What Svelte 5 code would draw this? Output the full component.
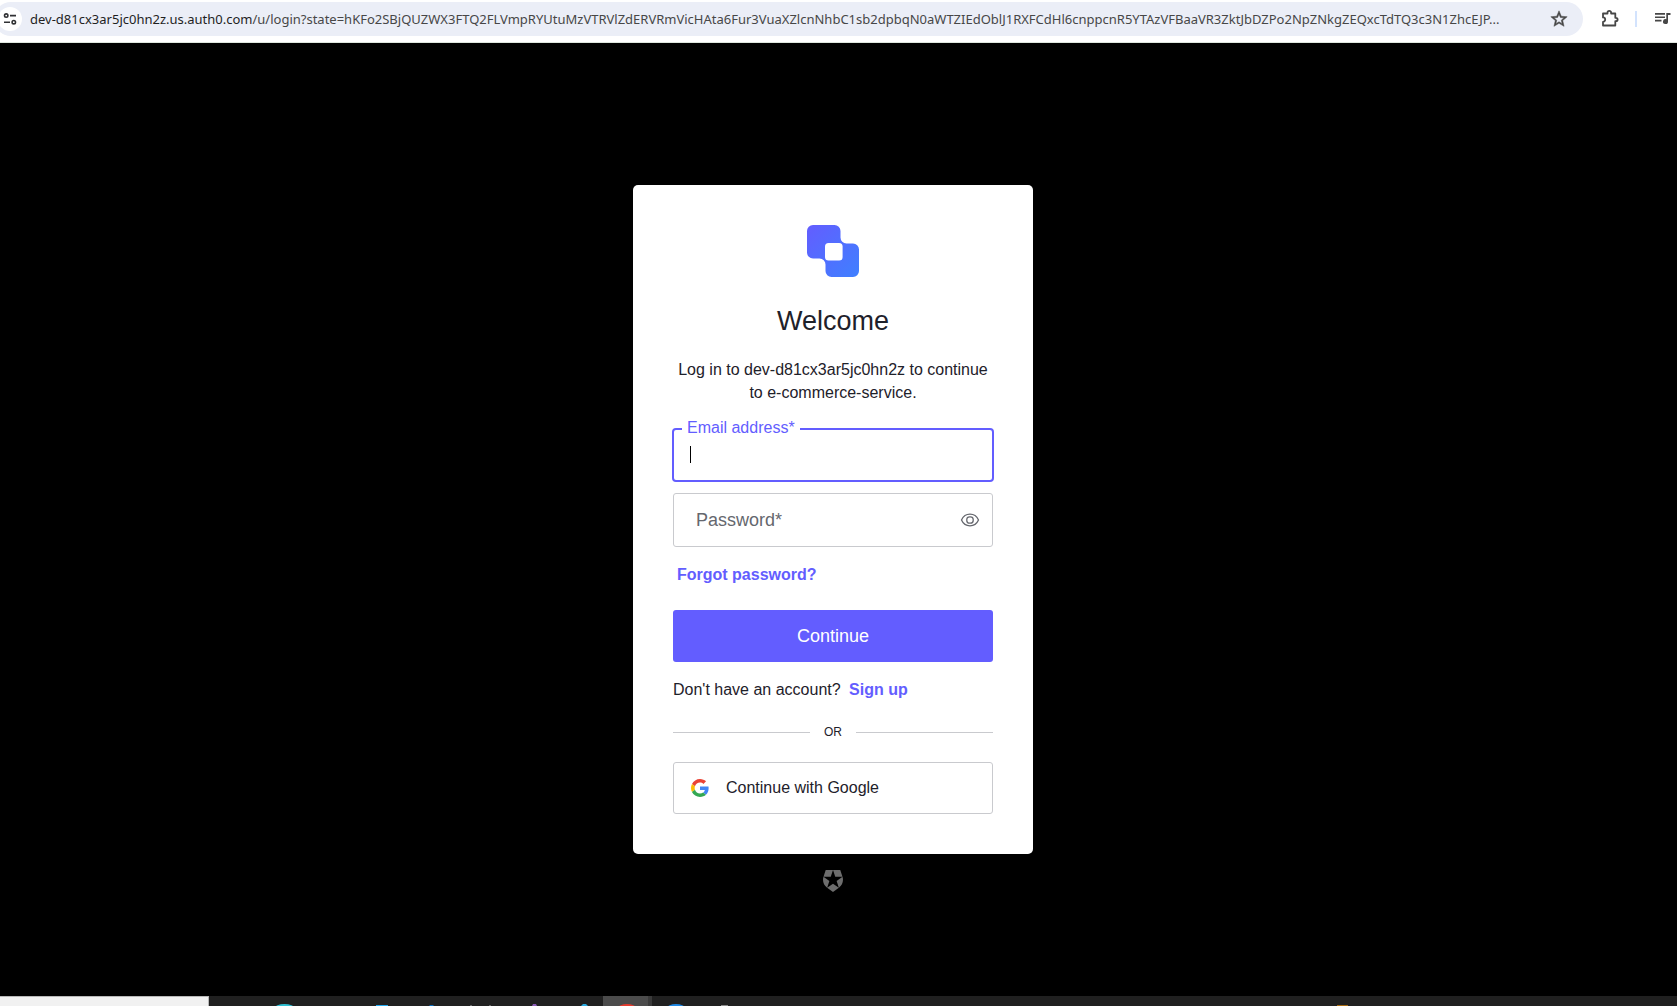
<script>
  const host = 'dev-d81cx3ar5jc0hn2z.us.auth0.com';
  const path =
    '/u/login?state=hKFo2SBjQUZWX3FTQ2FLVmpRYUtuMzVTRVlZdERVRmVicHAta6Fur3VuaXZlcnNhbC1sb2dpbqN0aWTZIEdOblJ1RXFCdHl6cnppcnR5YTAzVFBaaVR3ZktJbDZPo2NpZNkgZEQxcTdTQ3c3N1ZhcEJP...';
</script>

<div class="screen">
  <header class="toolbar">
    <div class="omnibox">
      <button class="icon-btn site" type="button" aria-label="View site information">
        <svg width="14" height="14" viewBox="0 0 14 14" fill="none" stroke="#303134" stroke-width="1.6">
          <circle cx="3.2" cy="3.6" r="1.7" />
          <path d="M7 3.6h6M1 10.2h6" />
          <circle cx="10.8" cy="10.2" r="1.7" />
        </svg>
      </button>
      <a class="url" href="#login">{host}<span>{path}</span></a>
      <button class="icon-btn" type="button" aria-label="Bookmark this page">
        <svg width="18" height="18" viewBox="1 1 22 22" fill="#474747" stroke="#474747" stroke-width="0.6">
          <path d="M22 9.24l-7.19-.62L12 2 9.19 8.63 2 9.24l5.46 4.73L5.82 21 12 17.27 18.18 21l-1.63-7.03L22 9.24zM12 15.4l-3.76 2.27 1-4.28-3.32-2.88 4.38-.38L12 6.1l1.71 4.04 4.38.38-3.32 2.88 1 4.28L12 15.4z" />
        </svg>
      </button>
    </div>
    <button class="icon-btn" type="button" aria-label="Extensions">
      <svg width="20" height="20" viewBox="0 0 20 20" fill="none" stroke="#474747" stroke-width="1.8" stroke-linejoin="round">
        <path d="M3 4.500h4.500V3.700a1.800 1.800 0 0 1 3.600 0v.8h4.200v4.300h.6a1.700 1.700 0 0 1 0 3.400h-.6v4.300H3v-3.700a2.200 2.200 0 0 0 0-4.400z" />
      </svg>
    </button>
    <span class="divider"></span>
    <button class="icon-btn" type="button" aria-label="Media controls">
      <svg width="20" height="20" viewBox="0 0 20 20" fill="#474747">
        <path d="M2 4h10v1.700H2zM2 7.400h10v1.700H2zM2 10.800h6.500v1.700H2zM13.300 4H17.500v1.900H15v6.600a2.500 2.500 0 1 1-1.700-2.300z" />
      </svg>
    </button>
  </header>

  <main>
    <section class="card">
      <svg class="logo" width="52" height="52" viewBox="0 0 52 52">
        <defs>
          <linearGradient id="brand" x1="0" y1="0" x2="1" y2="1">
            <stop offset="0" stop-color="#635dff" />
            <stop offset="1" stop-color="#3f80ff" />
          </linearGradient>
        </defs>
        <path
          fill="url(#brand)"
          d="M6 0H27.500A6 6 0 0 1 33.500 6V12.500A6 6 0 0 0 39.500 18.500H46A6 6 0 0 1 52 24.500V46A6 6 0 0 1 46 52H24.500A6 6 0 0 1 18.500 46V39.500A6 6 0 0 0 12.500 33.500H6A6 6 0 0 1 0 27.500V6A6 6 0 0 1 6 0Z"
        />
        <rect x="18" y="18" width="17.600" height="17.600" rx="3.500" fill="#fff" />
      </svg>
      <h1>Welcome</h1>
      <p class="intro">Log in to dev-d81cx3ar5jc0hn2z to continue to e-commerce-service.</p>

      <form onsubmit={(e) => e.preventDefault()}>
        <div class="field active">
          <label for="email">Email address*</label>
          <input id="email" type="email" autocomplete="username" />
          <span class="caret"></span>
        </div>
        <div class="field">
          <label for="password">Password*</label>
          <input id="password" type="password" autocomplete="current-password" />
          <button class="eye" type="button" aria-label="Show password">
            <svg width="20" height="16" viewBox="0 0 20 16" fill="none" stroke="#65676e" stroke-width="1.3">
              <path d="M1.500 8C3.300 4 6.200 2.200 10 2.200S16.700 4 18.500 8C16.700 12 13.800 13.800 10 13.800S3.300 12 1.500 8z" />
              <rect x="6.800" y="4.800" width="6.400" height="6.400" rx="2.800" />
            </svg>
          </button>
        </div>
        <a class="forgot" href="#reset">Forgot password?</a>
        <button class="primary" type="submit">Continue</button>
      </form>

      <p class="signup">Don't have an account? <a href="#signup">Sign up</a></p>
      <div class="or"><span>OR</span></div>
      <button class="google" type="button">
        <svg width="18" height="18" viewBox="0 0 48 48">
          <path fill="#EA4335" d="M24 9.500c3.540 0 6.710 1.220 9.210 3.600l6.850-6.850C35.900 2.380 30.470 0 24 0 14.620 0 6.510 5.380 2.560 13.220l7.980 6.190C12.430 13.720 17.740 9.500 24 9.500z" />
          <path fill="#4285F4" d="M46.980 24.550c0-1.570-.15-3.090-.38-4.550H24v9.020h12.940c-.58 2.960-2.260 5.480-4.780 7.180l7.730 6c4.510-4.180 7.090-10.360 7.090-17.650z" />
          <path fill="#FBBC05" d="M10.530 28.590c-.48-1.450-.76-2.990-.76-4.590s.27-3.140.76-4.590l-7.980-6.190C.92 16.460 0 20.120 0 24c0 3.880.92 7.540 2.560 10.780l7.970-6.190z" />
          <path fill="#34A853" d="M24 48c6.480 0 11.930-2.130 15.890-5.810l-7.730-6c-2.150 1.450-4.920 2.300-8.160 2.300-6.260 0-11.570-4.220-13.470-9.910l-7.980 6.190C6.510 42.620 14.620 48 24 48z" />
        </svg>
        Continue with Google
      </button>
    </section>

    <a class="badge" href="#auth0" aria-label="Auth0">
      <svg width="20" height="22" viewBox="1.500 0 21 24" fill="#6d6d6d" preserveAspectRatio="none">
        <path d="M21.98 7.448L19.62 0H4.347L2.02 7.448c-1.352 4.312.03 9.206 3.815 12.015L12.007 24l6.157-4.552c3.755-2.810 5.182-7.688 3.815-12.015l-6.160 4.580 2.343 7.450-6.157-4.597-6.158 4.580 2.358-7.433-6.188-4.550 7.630-.045L12.008 0l2.356 7.404 7.615.044z" />
      </svg>
    </a>
  </main>

  <footer class="taskbar">
    <div class="search"></div>
    <div class="apps">
      <svg class="app" viewBox="0 0 49 10"><ellipse cx="24.500" cy="12" rx="10" ry="4" fill="#2fc0d3" /></svg>
      <span class="app"></span>
      <svg class="app" viewBox="0 0 49 10"><path d="M18 9h12v1H18z" fill="#22a9f0" /></svg>
      <svg class="app" viewBox="0 0 49 10"><path d="M22 10l1-1h3l1 1z" fill="#0a6fc2" /></svg>
      <svg class="app" viewBox="0 0 49 10"><path d="M14 9h2v1h-2zM33 9h2v1h-2z" fill="#666" /></svg>
      <svg class="app" viewBox="0 0 49 10"><path d="M27 10l1-2h3l1 2z" fill="#8a5bb5" /></svg>
      <svg class="app" viewBox="0 0 49 10"><path d="M27 10l2-2h3l2 2z" fill="#2aa9e0" /></svg>
      <svg class="app" viewBox="0 0 49 10">
        <path d="M0 0h45v10H0z" fill="#4b4b4b" />
        <path d="M45 0h4v10h-4z" fill="#3a3a3a" />
        <ellipse cx="24" cy="12" rx="9" ry="4" fill="#e33b2e" />
      </svg>
      <svg class="app" viewBox="0 0 49 10"><ellipse cx="24" cy="12" rx="9" ry="4" fill="#1e88e5" /></svg>
      <svg class="app" viewBox="0 0 49 10"><path d="M20 9h7v1h-7z" fill="#8a8a8a" /></svg>
    </div>
    <svg class="app tray" viewBox="0 0 49 10"><path d="M19 9h11v1H19z" fill="#a86a10" /></svg>
  </footer>
</div>

<style>
  :global(body) {
    margin: 0;
    background: #000;
  }

  .screen {
    display: flex;
    flex-direction: column;
    min-height: 100vh;
    font-family: 'Liberation Sans', Arial, sans-serif;
    font-size: 16px;
    color: #1e212a;
  }

  button {
    font: inherit;
    cursor: pointer;
  }

  a {
    text-decoration: none;
  }

  svg {
    display: block;
  }

  .toolbar {
    display: flex;
    align-items: center;
    gap: 10px;
    height: 34px;
    padding: 2px 4px 6px 0;
    border-bottom: 1px solid #dfe7df;
    background: #fff;
  }

  .omnibox {
    display: flex;
    flex: 1;
    align-items: center;
    min-width: 0;
    height: 34px;
    margin-left: -6px;
    padding-right: 14px;
    border-radius: 17px;
    background: #ebeef7;
  }

  .icon-btn {
    display: grid;
    flex: none;
    place-items: center;
    width: 20px;
    height: 24px;
    padding: 0;
    border: 0;
    background: none;
  }

  .site {
    width: 24px;
    margin-left: 4px;
    border-radius: 12px;
    background: #fff;
  }

  .url {
    flex: 1;
    min-width: 0;
    margin-left: 8px;
    overflow: hidden;
    font-family: 'Noto Sans', 'Open Sans', sans-serif;
    font-size: 13px;
    line-height: 20px;
    white-space: nowrap;
    color: #1f1f1f;
  }

  .url span {
    color: #474747;
  }

  .toolbar > .icon-btn:first-of-type {
    margin-left: 7px;
  }

  .divider {
    width: 2px;
    height: 16px;
    margin: 0 6px 0 5px;
    background: #d3e3fd;
  }

  main {
    display: grid;
    flex: 1;
    grid-template-rows: 1fr auto 1fr;
    justify-items: center;
    padding-right: 11px;
  }

  .card {
    box-sizing: border-box;
    grid-row: 2;
    width: 400px;
    max-width: 100%;
    padding: 40px;
    border-radius: 5px;
    background: #fff;
  }

  .logo {
    margin: 0 auto;
  }

  h1 {
    margin: 24px 0 0;
    font-size: 27px;
    font-weight: 400;
    line-height: 40px;
    text-align: center;
  }

  .intro {
    margin: 17px 0 24px;
    line-height: 23px;
    text-align: center;
  }

  form {
    display: flex;
    flex-direction: column;
  }

  .field {
    position: relative;
    box-sizing: border-box;
    height: 54px;
    border: 1px solid #c9cace;
    border-radius: 3px;
  }

  .field.active {
    margin: 0 -1px 11px;
    border: 2px solid #635dff;
    border-radius: 4px;
  }

  .field input {
    box-sizing: border-box;
    width: 100%;
    height: 100%;
    padding: 0 16px;
    border: 0;
    outline: 0;
    background: none;
    font: inherit;
  }

  .field label {
    position: absolute;
    top: 15px;
    left: 17px;
    padding: 0 5px;
    background: #fff;
    font-size: 18px;
    line-height: 22px;
    color: #65676e;
  }

  .field.active label {
    top: -12px;
    left: 8px;
    font-size: 16px;
    line-height: 20px;
    color: #635dff;
  }

  .caret {
    position: absolute;
    top: 16px;
    left: 16px;
    width: 1px;
    height: 17px;
    background: #000;
  }

  .eye {
    position: absolute;
    top: 18px;
    right: 12px;
    padding: 0;
    border: 0;
    background: none;
  }

  .forgot,
  .signup a {
    padding: 0 4px;
    font-weight: 700;
    color: #635dff;
  }

  .forgot {
    align-self: flex-start;
    margin: 16px 0 24px;
    line-height: 23px;
  }

  .primary {
    height: 52px;
    border: 0;
    border-radius: 3px;
    background: #635dff;
    font-size: 18px;
    color: #fff;
  }

  .signup {
    margin: 16px 0 21px;
    line-height: 23px;
  }

  .or {
    display: flex;
    align-items: center;
    gap: 14px;
    margin-bottom: 20px;
    font-size: 12px;
    line-height: 20px;
  }

  .or::before,
  .or::after {
    flex: 1;
    height: 1px;
    background: #c9cace;
    content: '';
  }

  .google {
    display: flex;
    gap: 17px;
    align-items: center;
    box-sizing: border-box;
    width: 100%;
    height: 52px;
    padding: 0 17px;
    border: 1px solid #c9cace;
    border-radius: 3px;
    background: #fff;
    color: #1e212a;
  }

  .badge {
    grid-row: 3;
    align-self: start;
    margin-top: 16px;
  }

  .taskbar {
    display: flex;
    height: 10px;
    overflow: hidden;
    background: #202020;
  }

  .search {
    box-sizing: border-box;
    flex: none;
    width: 209px;
    border-top: 1px solid #b8b8b8;
    border-right: 1px solid #b8b8b8;
    background: #f1f1f1;
  }

  .apps {
    display: flex;
    margin-left: 51px;
  }

  .app {
    flex: none;
    width: 49px;
    height: 10px;
  }

  .tray {
    margin: 0 310px 0 auto;
  }
</style>
